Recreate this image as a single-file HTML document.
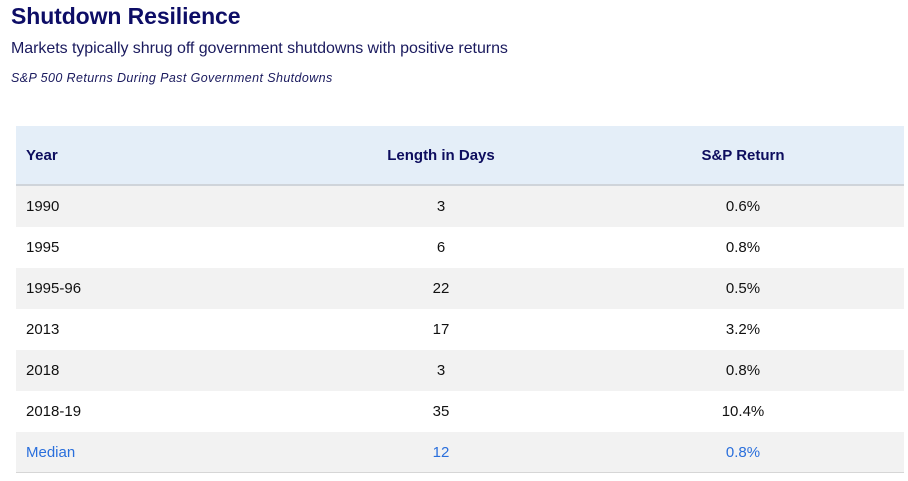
<!DOCTYPE html>
<html><head><style>
body{margin:0;width:908px;height:481px;background:#fff;font-family:"Liberation Sans",sans-serif;overflow:hidden;position:relative}
h1{position:absolute;left:11px;top:3px;margin:0;font-size:23px;font-weight:bold;color:#0d0d66;letter-spacing:-0.1px}
.sub{position:absolute;left:11px;top:40px;font-size:16px;color:#1a1a5e;letter-spacing:-0.05px}
.cap{position:absolute;left:11px;top:71px;font-size:12.5px;font-style:italic;color:#1a1a5e;letter-spacing:0.4px}
table{position:absolute;left:16px;top:126px;width:888px;border-collapse:collapse;font-size:15px}
th{height:58px;background:#e4eef8;color:#0d0d5e;font-weight:bold;border-bottom:2px solid #cfd4da;padding:0}
td{height:40px;padding:0;color:#111;border-bottom:1px solid transparent}
td:first-child,th:first-child{text-align:left;padding-left:10px}
td,th{text-align:center}
tr.g td{background:#f2f2f2}
tr.m td{background:#f2f2f2;color:#2a6fdc;border-top:1px solid #d6d6d6;border-bottom:1px solid #d6d6d6}
</style></head><body>
<h1>Shutdown Resilience</h1>
<div class="sub">Markets typically shrug off government shutdowns with positive returns</div>
<div class="cap">S&amp;P 500 Returns During Past Government Shutdowns</div>
<table>
<colgroup><col style="width:284px"><col style="width:282px"><col style="width:322px"></colgroup>
<tr><th>Year</th><th>Length in Days</th><th>S&amp;P Return</th></tr>
<tr class="g"><td>1990</td><td>3</td><td>0.6%</td></tr>
<tr><td>1995</td><td>6</td><td>0.8%</td></tr>
<tr class="g"><td>1995-96</td><td>22</td><td>0.5%</td></tr>
<tr><td>2013</td><td>17</td><td>3.2%</td></tr>
<tr class="g"><td>2018</td><td>3</td><td>0.8%</td></tr>
<tr><td>2018-19</td><td>35</td><td>10.4%</td></tr>
<tr class="m"><td>Median</td><td>12</td><td>0.8%</td></tr>
</table>
</body></html>
